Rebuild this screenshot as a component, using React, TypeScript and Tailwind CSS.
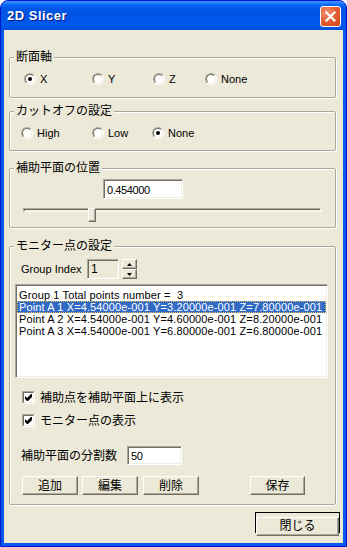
import React from 'react';

const sunken =
  'border border-t-[#ACA899] border-l-[#ACA899] border-b-white border-r-white shadow-[inset_1px_1px_0_#716F64,inset_-1px_-1px_0_#F1EFE2]';
const raised =
  'border border-t-white border-l-white border-r-[#716F64] border-b-[#716F64] shadow-[inset_-1px_-1px_0_#ACA899] bg-[#ECE9D8]';

function Radio({ checked, label, className }: { checked?: boolean; label: string; className: string }) {
  return (
    <div className={`flex h-[12px] items-center gap-[4px] ${className}`}>
      <span className="flex h-[12px] w-[12px] shrink-0 rounded-full border border-t-[#ACA899] border-l-[#ACA899] border-b-white border-r-white">
        <span className="flex flex-1 items-center justify-center rounded-full border border-t-[#716F64] border-l-[#716F64] border-b-[#F1EFE2] border-r-[#F1EFE2] bg-white">
          {checked && <span className="h-[4px] w-[4px] rounded-full bg-black" />}
        </span>
      </span>
      <span className="text-[11px] leading-[12px]">{label}</span>
    </div>
  );
}

function Check({ label, className }: { label: string; className: string }) {
  return (
    <div className={`flex h-[13px] items-center gap-[5px] ${className}`}>
      <span className="flex h-[13px] w-[13px] shrink-0 border border-t-[#ACA899] border-l-[#ACA899] border-b-white border-r-white">
        <span className="flex flex-1 items-center justify-center border border-t-[#716F64] border-l-[#716F64] border-b-[#F1EFE2] border-r-[#F1EFE2] bg-white">
          <svg width="7" height="7" viewBox="0 0 7 7">
            <path d="M0 2 L2 4 L6 0 H7 V3 L3 7 H2 L0 5 Z" fill="#000" />
          </svg>
        </span>
      </span>
      <span className="text-[12px] leading-[14px]">{label}</span>
    </div>
  );
}

function Group({ label, className, children }: { label: string; className: string; children: React.ReactNode }) {
  return (
    <div
      className={`relative box-border w-[327px] rounded-[2px] border border-[#ACA899] shadow-[inset_1px_1px_0_#fff,1px_1px_0_#fff] ${className}`}
    >
      <span className="absolute left-[4px] top-[-8px] bg-[#ECE9D8] px-[2px] text-[12px] leading-[14px]">{label}</span>
      {children}
    </div>
  );
}

export default function App() {
  return (
    <div className="flex h-[547px] w-[347px] flex-col overflow-hidden rounded-t-[8px] border border-[#0019CF] bg-[#0858EA] font-['Liberation_Sans','Noto_Sans_CJK_JP',sans-serif] text-black">
      {/* title bar */}
      <div className="flex h-[29px] shrink-0 items-center justify-between bg-[linear-gradient(180deg,#3A8CFA_0%,#2F86FF_6%,#0A6CF8_12%,#0259EA_22%,#0054E3_40%,#0056EA_70%,#005AF0_85%,#004FDA_100%)] pl-[6px] pr-[5px]">
        <span className="mt-[1px] text-[13px] font-bold tracking-[0.5px] text-white [text-shadow:1px_1px_0_#0A1883]">
          2D Slicer
        </span>
        <div className="mt-[2px] flex h-[21px] w-[21px] items-center justify-center rounded-[3px] border border-white bg-[radial-gradient(circle_at_30%_30%,#F2906E,#E25A30_55%,#C8431C_100%)]">
          <svg width="11" height="11" viewBox="0 0 11 11">
            <path d="M1.5 1.5 L9.5 9.5 M9.5 1.5 L1.5 9.5" stroke="#fff" strokeWidth="2.2" strokeLinecap="square" />
          </svg>
        </div>
      </div>

      {/* body */}
      <div className="flex flex-1 px-[3px] pb-[3px]">
        <div className="flex flex-1 flex-col bg-[#ECE9D8] pl-[5px] pt-[27px]">
          <Group label="断面軸" className="h-[41px]">
            <div className="ml-[14px] mt-[15px] flex">
              <Radio checked label="X" className="w-[68px]" />
              <Radio label="Y" className="w-[61px]" />
              <Radio label="Z" className="w-[52px]" />
              <Radio label="None" className="w-[60px]" />
            </div>
          </Group>

          <Group label="カットオフの設定" className="mt-[13px] h-[40px]">
            <div className="ml-[11px] mt-[15px] flex">
              <Radio label="High" className="w-[71px]" />
              <Radio label="Low" className="w-[60px]" />
              <Radio checked label="None" className="w-[60px]" />
            </div>
          </Group>

          <Group label="補助平面の位置" className="mt-[17px] h-[60px]">
            <div className={`ml-[93px] mt-[10px] h-[20px] w-[80px] bg-white pl-[3px] text-[11px] leading-[20px] tracking-[-0.4px] ${sunken}`}>
              0.454000
            </div>
            <div className="relative ml-[13px] mt-[9px] h-[14px] w-[298px]">
              <div className="mt-[6px] h-[4px] w-full border-t border-l border-t-[#ACA899] border-l-[#ACA899] border-b border-r border-b-white border-r-white shadow-[inset_1px_1px_0_#716F64]" />
              <div className={`absolute left-[65px] top-0 h-[14px] w-[8px] ${raised}`} />
            </div>
          </Group>

          <Group label="モニター点の設定" className="mt-[18px] h-[259px]">
            <div className="ml-[11px] mt-[12px] flex h-[20px] items-center">
              <span className="w-[66px] text-[11px] leading-[12px]">Group Index</span>
              <div className={`h-[20px] w-[32px] bg-[#ECE9D8] pl-[3px] text-[12px] leading-[19px] ${sunken}`}>1</div>
              <div className="ml-[3px] flex h-[20px] w-[15px] flex-col">
                <div className={`flex h-[10px] items-center justify-center ${raised}`}>
                  <svg width="5" height="3" viewBox="0 0 5 3">
                    <path d="M2.5 0 L5 3 H0 Z" fill="#000" />
                  </svg>
                </div>
                <div className={`flex h-[10px] items-center justify-center ${raised}`}>
                  <svg width="5" height="3" viewBox="0 0 5 3">
                    <path d="M0 0 H5 L2.5 3 Z" fill="#000" />
                  </svg>
                </div>
              </div>
            </div>

            <div className={`ml-[5px] mt-[5px] h-[94px] w-[313px] bg-white px-[1px] pt-[4px] text-[11px] leading-[12px] tracking-[0.12px] ${sunken}`}>
              <div className="h-[12px] whitespace-pre pl-[2px]">Group 1 Total points number =  3</div>
              <div className="h-[12px] whitespace-pre bg-[#316AC5] pl-[2px] text-white outline-1 outline-dotted outline-[#E8C35A] -outline-offset-1">
                Point A 1 X=4.54000e-001 Y=3.20000e-001 Z=7.80000e-001
              </div>
              <div className="h-[12px] whitespace-pre pl-[2px]">Point A 2 X=4.54000e-001 Y=4.60000e-001 Z=8.20000e-001</div>
              <div className="h-[12px] whitespace-pre pl-[2px]">Point A 3 X=4.54000e-001 Y=6.80000e-001 Z=6.80000e-001</div>
            </div>

            <Check label="補助点を補助平面上に表示" className="ml-[12px] mt-[13px]" />
            <Check label="モニター点の表示" className="ml-[12px] mt-[10px]" />

            <div className="ml-[11px] mt-[19px] flex h-[19px] items-center">
              <span className="w-[106px] text-[12px] leading-[14px]">補助平面の分割数</span>
              <div className={`h-[19px] w-[55px] bg-white pl-[3px] text-[11px] leading-[19px] tracking-[-0.4px] ${sunken}`}>50</div>
            </div>

            <div className="ml-[12px] mt-[11px] flex">
              <button className={`h-[19px] w-[56px] text-[12px] leading-[14px] ${raised}`}>追加</button>
              <button className={`ml-[4px] h-[19px] w-[56px] text-[12px] leading-[14px] ${raised}`}>編集</button>
              <button className={`ml-[5px] h-[19px] w-[56px] text-[12px] leading-[14px] ${raised}`}>削除</button>
              <button className={`ml-[51px] h-[19px] w-[55px] text-[12px] leading-[14px] ${raised}`}>保存</button>
            </div>
          </Group>

          <div className="ml-[246px] mt-[7px] h-[21px] w-[85px] border border-black">
            <button className={`h-full w-full text-[12px] leading-[14px] ${raised}`}>閉じる</button>
          </div>
        </div>
      </div>
    </div>
  );
}
